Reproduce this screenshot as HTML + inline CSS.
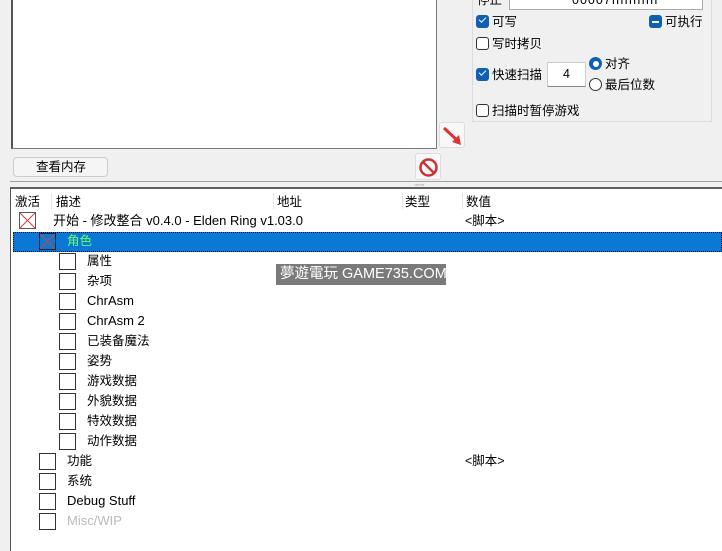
<!DOCTYPE html><html><head><meta charset="utf-8"><style>
body{margin:0;width:722px;height:551px;overflow:hidden;background:#f0f0f0;font-family:"Liberation Sans","Noto Sans CJK SC",sans-serif;font-size:12.5px;color:#000;position:relative}
div,span{position:absolute;box-sizing:border-box}
.cb{width:17px;height:17px;border:1px solid #333;background:#fff}
.t{white-space:nowrap;line-height:18px}
.ck{width:13px;height:13px;border-radius:3px;background:#0f5fb5}
.ek{width:13px;height:13px;border-radius:3px;border:1px solid #333;background:#fff}
</style></head><body>
<div style="left:11px;top:-2px;width:426px;height:151px;background:#fff;border:1px solid #7a7a7a;border-left:2px solid #555"></div>
<div style="left:472px;top:-2px;width:240px;height:124px;border:1px solid #dcdcdc"></div>
<div class="t" style="left:477px;top:-9px">停止</div>
<div style="left:509px;top:-4px;width:194px;height:14px;background:#fff;border:1px solid #aaa"></div>
<div class="t" style="left:572px;top:-9px;letter-spacing:1px">00007fffffffffff</div>
<div class="ck" style="left:476px;top:15px"><span style="left:3px;top:2px;width:7px;height:4px;border-left:1.5px solid #fff;border-bottom:1.5px solid #fff;transform:rotate(-45deg)"></span></div>
<div class="t" style="left:492px;top:13px">可写</div>
<div class="ck" style="left:649px;top:15px"><span style="left:3px;top:6px;width:7px;height:1.5px;background:#fff"></span></div>
<div class="t" style="left:665px;top:13px">可执行</div>
<div class="ek" style="left:476px;top:37px"></div>
<div class="t" style="left:492px;top:35px">写时拷贝</div>
<div class="ck" style="left:476px;top:68px"><span style="left:3px;top:2px;width:7px;height:4px;border-left:1.5px solid #fff;border-bottom:1.5px solid #fff;transform:rotate(-45deg)"></span></div>
<div class="t" style="left:492px;top:66px">快速扫描</div>
<div style="left:547px;top:62px;width:39px;height:25px;background:#fff;border:1px solid #ccc;border-bottom:1px solid #888"></div>
<div class="t" style="left:563px;top:65px">4</div>
<div style="left:589px;top:57px;width:13px;height:13px;border-radius:50%;background:#0f5fb5"><span style="left:3.5px;top:3.5px;width:6px;height:6px;border-radius:50%;background:#fff"></span></div>
<div class="t" style="left:605px;top:55px">对齐</div>
<div style="left:589px;top:78px;width:13px;height:13px;border-radius:50%;border:1px solid #333;background:#fff"></div>
<div class="t" style="left:605px;top:76px">最后位数</div>
<div class="ek" style="left:476px;top:104px"></div>
<div class="t" style="left:492px;top:102px">扫描时暂停游戏</div>
<div style="left:439px;top:122px;width:26px;height:26px;border:1px solid #ddd;border-radius:3px;background:#f8f8f8">
<svg width="26" height="26" style="position:absolute;left:0;top:0"><path d="M4 5 L18 18" stroke="#d33" stroke-width="3"/><path d="M21 22 L12 19 L19 12 Z" fill="#d33"/></svg></div>
<div style="left:13px;top:157px;width:95px;height:20px;border:1px solid #ccc;border-radius:4px;background:#f5f5f5"></div>
<div class="t" style="left:36px;top:158px">查看内存</div>
<div style="left:415px;top:153px;width:26px;height:27px;border:1px solid #ddd;border-radius:3px;background:#f8f8f8">
<svg width="26" height="27" style="position:absolute;left:0;top:0"><circle cx="12.5" cy="13.5" r="8" fill="none" stroke="#c33" stroke-width="2.5"/><path d="M7 8 L18 19" stroke="#c33" stroke-width="2.5"/></svg></div>
<div style="left:10px;top:181px;width:712px;height:1px;background:#a0a0a0"></div>
<div class="t" style="left:414px;top:178px;font-size:8px;color:#888;letter-spacing:-1px">::::::::</div>
<div style="left:10px;top:187px;width:712px;height:2px;background:#606060"></div>
<div style="left:10px;top:189px;width:712px;height:362px;background:#fff;border-left:1px solid #555"></div>
<div style="left:51px;top:193px;width:1px;height:16px;background:#e5e5e5"></div>
<div style="left:273px;top:193px;width:1px;height:16px;background:#e5e5e5"></div>
<div style="left:402px;top:193px;width:1px;height:16px;background:#e5e5e5"></div>
<div style="left:462px;top:193px;width:1px;height:16px;background:#e5e5e5"></div>
<div class="t" style="left:15px;top:193px">激活</div>
<div class="t" style="left:56px;top:193px">描述</div>
<div class="t" style="left:277px;top:193px">地址</div>
<div class="t" style="left:405px;top:193px">类型</div>
<div class="t" style="left:466px;top:193px">数值</div>
<div class="cb" style="left:19px;top:212px;border-color:#555"><svg width="15" height="15" style="position:absolute"><path d="M0 0L15 15M15 0L0 15" stroke="#c44" stroke-width="1"/></svg></div>
<div class="t" style="left:53px;top:212px;font-size:13px">开始 - 修改整合 v0.4.0 - Elden Ring v1.03.0</div>
<div class="t" style="left:465px;top:212px">&lt;脚本&gt;</div>
<div style="left:13px;top:232px;width:709px;height:20px;background:#0b78d6;border:1px dotted #003"></div>
<div class="cb" style="left:39px;top:233px;background:#0b78d6;border-color:#223"><svg width="15" height="15" style="position:absolute"><path d="M0 0L15 15M15 0L0 15" stroke="#c44" stroke-width="1"/></svg></div>
<div class="t" style="left:67px;top:232px;color:#6f6">角色</div>
<div class="cb" style="left:59px;top:253px"></div><div class="t" style="left:87px;top:252px">属性</div>
<div class="cb" style="left:59px;top:273px"></div><div class="t" style="left:87px;top:272px">杂项</div>
<div class="cb" style="left:59px;top:293px"></div><div class="t" style="left:87px;top:292px;font-size:13px">ChrAsm</div>
<div class="cb" style="left:59px;top:313px"></div><div class="t" style="left:87px;top:312px;font-size:13px">ChrAsm 2</div>
<div class="cb" style="left:59px;top:333px"></div><div class="t" style="left:87px;top:332px">已装备魔法</div>
<div class="cb" style="left:59px;top:353px"></div><div class="t" style="left:87px;top:352px">姿势</div>
<div class="cb" style="left:59px;top:373px"></div><div class="t" style="left:87px;top:372px">游戏数据</div>
<div class="cb" style="left:59px;top:393px"></div><div class="t" style="left:87px;top:392px">外貌数据</div>
<div class="cb" style="left:59px;top:413px"></div><div class="t" style="left:87px;top:412px">特效数据</div>
<div class="cb" style="left:59px;top:433px"></div><div class="t" style="left:87px;top:432px">动作数据</div>
<div class="cb" style="left:39px;top:453px"></div><div class="t" style="left:67px;top:452px">功能</div>
<div class="t" style="left:465px;top:452px">&lt;脚本&gt;</div>
<div class="cb" style="left:39px;top:473px"></div><div class="t" style="left:67px;top:472px">系统</div>
<div class="cb" style="left:39px;top:493px"></div><div class="t" style="left:67px;top:492px;font-size:13px">Debug Stuff</div>
<div class="cb" style="left:39px;top:513px"></div><div class="t" style="left:67px;top:512px;color:#bbb;font-size:13px">Misc/WIP</div>
<div style="left:276px;top:264px;width:170px;height:21px;background:#7a7a7a"></div>
<div class="t" style="left:280px;top:265px;color:#fff;font-size:14.5px">夢遊電玩 GAME735.COM</div>
</body></html>
